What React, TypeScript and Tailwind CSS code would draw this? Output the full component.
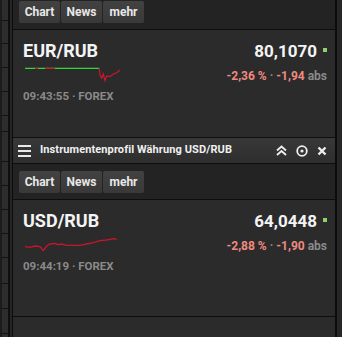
import React from "react";

const font = { fontFamily: "Roboto, 'Liberation Sans', sans-serif" };

function Toolbar({ h }: { h: string }) {
  return (
    <div className={`${h} flex items-end pl-[6px] pb-[6px] bg-[#232323] border-b border-[#0e0e0e]`}>
      <div className="flex gap-[1px]">
        {["Chart", "News", "mehr"].map((t) => (
          <div
            key={t}
            className="w-[41px] h-[22px] flex items-center justify-center rounded-[2px] bg-gradient-to-b from-[#424242] to-[#393939] text-[12px] font-bold text-[#e8e8e8]"
          >
            {t}
          </div>
        ))}
      </div>
    </div>
  );
}

function Card({
  h,
  title,
  price,
  pct,
  abs,
  time,
  spark,
}: {
  h: string;
  title: string;
  price: string;
  pct: string;
  abs: string;
  time: string;
  spark: React.ReactNode;
}) {
  return (
    <div className={`${h} flex justify-between pl-[10px] pr-[8px] pt-[11px] bg-[#2b2b2b] border-b border-[#0e0e0e]`}>
      <div className="flex flex-col">
        <div className="text-[18px] leading-[20px] font-bold text-[#f4f4f4]">{title}</div>
        <div className="mt-[1px]">{spark}</div>
        <div className="mt-[4px] text-[11.5px] leading-[16px] font-bold text-[#8a8a8a]">{time}</div>
      </div>
      <div className="flex flex-col items-end">
        <div className="flex items-center gap-[6px]">
          <div className="text-[17px] leading-[20px] font-bold text-[#f4f4f4]">{price}</div>
          <div className="w-[4px] h-[4px] bg-[#8fd16a] mb-[2px]" />
        </div>
        <div className="mt-[7px] text-[12px] leading-[16px] font-bold">
          <span className="text-[#ef8a80]">{pct}</span>
          <span className="text-[#8a8a8a]"> · </span>
          <span className="text-[#ef8a80]">{abs}</span>
          <span className="text-[#8a8a8a]"> abs</span>
        </div>
      </div>
    </div>
  );
}

function Spark1() {
  return (
    <svg width="100" height="22" viewBox="0 0 100 22">
      <polyline points="2,6.3 76.3,6.3" fill="none" stroke="#35d43a" strokeWidth="1.2" />
      <polyline points="12,6.3 15,6.3" fill="none" stroke="#c81530" strokeWidth="1.2" />
      <polyline points="22,6.3 32,6.3" fill="none" stroke="#c81530" strokeWidth="1.2" />
      <polyline
        points="76.3,6.3 77,13 78.7,16 80.3,12 82,18.7 83.7,14 87,14.7 90.3,12 93.7,10.7 97,8"
        fill="none"
        stroke="#d0142c"
        strokeWidth="1.2"
      />
    </svg>
  );
}

function Spark2() {
  return (
    <svg width="100" height="22" viewBox="0 0 100 22">
      <polyline
        points="2,14.7 7,15.3 12,14 17,14.7 20.3,18.7 23.7,14 27,12 32,11.3 35.3,12.7 38.7,12 43.7,13.3 57,13.3 63.7,12 70.3,10.7 77,8.7 83.7,8 90.3,6.7 93.7,7.3"
        fill="none"
        stroke="#c8142c"
        strokeWidth="1.3"
      />
    </svg>
  );
}

function LeftStrip() {
  const ticks = [20, 43, 67, 91, 115, 131, 161, 185, 209, 233, 257, 283, 308, 333];
  return (
    <div className="w-[13px] h-full flex">
      <div className="w-[2px] bg-[#1c1c1c]" />
      <div className="w-[6px] bg-[#2d2d2d] relative">
        {ticks.map((t) => (
          <div key={t} className="absolute left-0 right-0 h-[1px] bg-[#111]" style={{ top: t }} />
        ))}
      </div>
      <div className="w-[2px] bg-[#0f0f0f]" />
      <div className="w-[2px] bg-[#252525]" />
      <div className="w-[1px] bg-[#0c0c0c]" />
    </div>
  );
}

export default function App() {
  return (
    <div className="w-[342px] h-[337px] flex overflow-hidden bg-[#1a1a1a]" style={font}>
      <LeftStrip />
      <div className="w-[322px] flex flex-col">
        <Toolbar h="h-[30px]" />
        <Card
          h="h-[108px]"
          title="EUR/RUB"
          price="80,1070"
          pct="-2,36 %"
          abs="-1,94"
          time="09:43:55 · FOREX"
          spark={<Spark1 />}
        />
        <div className="h-[26px] flex items-center pl-[5px] pr-[8px] bg-gradient-to-b from-[#383838] to-[#2e2e2e] border-b border-[#0e0e0e]">
          <div className="flex flex-col gap-[3px]">
            <div className="w-[13px] h-[2px] bg-[#e8e8e8]" />
            <div className="w-[13px] h-[2px] bg-[#e8e8e8]" />
            <div className="w-[13px] h-[2px] bg-[#e8e8e8]" />
          </div>
          <div className="ml-[9px] text-[11px] tracking-[0.1px] font-bold text-[#f0f0f0]">Instrumentenprofil Währung USD/RUB</div>
          <div className="ml-auto flex items-center gap-[9px]">
            <svg width="11" height="11" viewBox="0 0 11 11">
              <polyline points="1,5.5 5.5,1.5 10,5.5" fill="none" stroke="#eee" strokeWidth="1.8" />
              <polyline points="1,10 5.5,6 10,10" fill="none" stroke="#eee" strokeWidth="1.8" />
            </svg>
            <svg width="12" height="12" viewBox="0 0 12 12">
              <circle cx="6" cy="6" r="4.8" fill="none" stroke="#eee" strokeWidth="1.8" />
              <circle cx="6" cy="6" r="1.6" fill="#eee" />
            </svg>
            <svg width="10" height="10" viewBox="0 0 10 10">
              <path d="M1.5 1.5 L8.5 8.5 M8.5 1.5 L1.5 8.5" stroke="#eee" strokeWidth="2.4" />
            </svg>
          </div>
        </div>
        <Toolbar h="h-[36px]" />
        <Card
          h="h-[117px]"
          title="USD/RUB"
          price="64,0448"
          pct="-2,88 %"
          abs="-1,90"
          time="09:44:19 · FOREX"
          spark={<Spark2 />}
        />
        <div className="flex-1 bg-[#2b2b2b]" />
      </div>
      <div className="w-[2px] bg-[#0c0c0c]" />
      <div className="w-[5px] bg-[#262626]" />
    </div>
  );
}
